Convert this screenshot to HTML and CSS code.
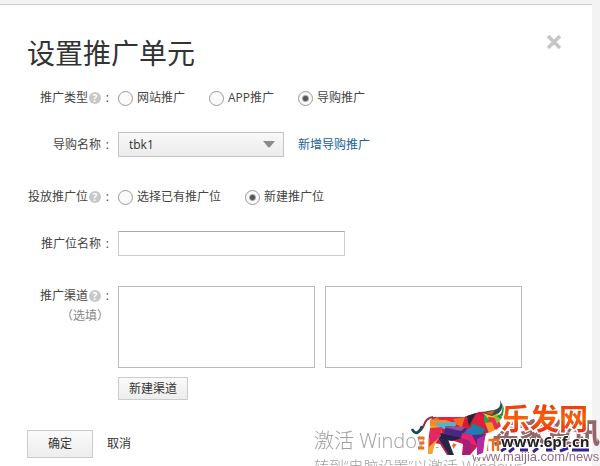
FILE: index.html
```html
<!DOCTYPE html>
<html lang="zh-CN">
<head>
    <meta charset="UTF-8">
    <meta name="viewport" content="width=device-width, initial-scale=1.0">
    <title>设置推广单元</title>
    <link rel="stylesheet" href="styles.css">
</head>
<body>
    <div class="dialog">
        <div class="dialog-header">
            <h1>设置推广单元</h1>
            <button type="button" class="close" aria-label="关闭">
                <svg width="16" height="16" viewBox="0 0 16 16"><path d="M2 2L14 14M14 2L2 14" stroke="#c6c6c6" stroke-width="3.4" fill="none"/></svg>
            </button>
        </div>

        <form>
            <div class="form-row" role="radiogroup" aria-labelledby="typeLabel">
                <div class="row-label"><span id="typeLabel">推广类型</span><i class="help">?</i><span class="colon">:</span></div>
                <div class="options">
                    <label><input type="radio" name="type">网站推广</label>
                    <label><input type="radio" name="type">APP推广</label>
                    <label><input type="radio" name="type" checked>导购推广</label>
                </div>
            </div>

            <div class="form-row">
                <label class="row-label" for="guide">导购名称<span class="colon">:</span></label>
                <div class="inline">
                    <div class="select">
                        <select id="guide"><option>tbk1</option></select>
                        <svg width="12" height="7" viewBox="0 0 12 7"><path d="M0 0H12L7 6Q6 7 5 6Z" fill="#8c8c8c"/></svg>
                    </div>
                    <a href="#">新增导购推广</a>
                </div>
            </div>

            <div class="form-row section" role="radiogroup" aria-labelledby="placeLabel">
                <div class="row-label"><span id="placeLabel">投放推广位</span><i class="help">?</i><span class="colon">:</span></div>
                <div class="options">
                    <label><input type="radio" name="place">选择已有推广位</label>
                    <label><input type="radio" name="place" checked>新建推广位</label>
                </div>
            </div>

            <div class="form-row">
                <label class="row-label" for="placeName">推广位名称<span class="colon">:</span></label>
                <input type="text" id="placeName">
            </div>

            <div class="form-row section channel">
                <div class="channel-label">
                    <label class="row-label" for="channel">推广渠道<i class="help">?</i><span class="colon">:</span></label>
                    <div class="optional">（选填）</div>
                </div>
                <div>
                    <div class="lists">
                        <select id="channel" size="4"></select>
                        <select size="4" aria-label="已选渠道"></select>
                    </div>
                    <button type="button" class="small">新建渠道</button>
                </div>
            </div>

            <div class="actions">
                <button type="submit">确定</button>
                <a href="#">取消</a>
            </div>
        </form>
    </div>

    <div class="overlay">
        <div class="activate">
            <p class="activate-title">激活 Windows</p>
            <p>转到“电脑设置”以激活 Windows</p>
        </div>
        <svg class="logo" width="190" height="76" viewBox="0 0 190 76">
            <defs>
                <linearGradient id="fire" x1="0" y1="0" x2="0" y2="1">
                    <stop offset="0" stop-color="#e0300a"/>
                    <stop offset=".5" stop-color="#fa620c"/>
                    <stop offset="1" stop-color="#e01818"/>
                </linearGradient>
            </defs>

            <!-- site name and address behind the bull -->
            <text class="site-name" x="82" y="53">卖家资讯</text>
            <text class="site-url" x="62" y="71">www.maijia.com/news</text>
            <path d="M8 48H22M10 53H20M8 58H25M38 50H48L42 58" stroke="#f36b1d" stroke-width="3" fill="none"/>
            <path d="M66 61V50H88V61M72 49V61M77 48V61M83 49V61" stroke="#f36b1d" stroke-width="2.4" fill="none"/>
            <path d="M91 61L96 58M99 62L104 58M110 60H118M123 62L128 58M136 60H144M150 61L158 58M162 60H179" stroke="#35208f" stroke-width="3" fill="none"/>

            <!-- bull: white halo and base colour first, then facets -->
            <g transform="translate(0 5)">
                <path d="M22 21L56 21L69 17L80 15L90 14L94 30L87 38L77 42L74 60H66L64 52L60 60H52L52 50L44 46L38 46L44 60H34L30 50L24 49L23 60H16L17 27Z" fill="#fff" stroke="#fff" stroke-width="4" stroke-linejoin="round"/>
                <path d="M22 22L54 22L69 17L82 16L90 24L84 35L75 39L73 57L67 60V52L60 60H52L53 49L38 44L43 60H37L30 49L24 48L22 59H18L19 40Z" fill="#c01f55"/>
                <path d="M2 35L6 38Q11 37 14 30Q16 23 23 22" stroke="#9c2a40" stroke-width="2" fill="none"/>
                <path d="M2 34Q4 38 7 38Q11 35 12 31" stroke="#184958" stroke-width="2.6" fill="none"/>
                <path d="M20 25L28 22L43 23L31 30Z" fill="#f16a27"/>
                <path d="M28 22L54 22L47 28L31 29Z" fill="#e9243a"/>
                <path d="M20 25L31 30L32 39L20 34Z" fill="#ffb229"/>
                <path d="M20 25L36 25L47 29L31 32L20 31Z" fill="#f58a2a"/>
                <path d="M24 28L48 27L42 36L31 33Z" fill="#4fb7cc"/>
                <path d="M43 24L56 22L52 33L46 29Z" fill="#f36a22"/>
                <path d="M20 33L32 32L31 41L20 46Z" fill="#e32a50"/>
                <path d="M36 31L57 33L51 43L34 38Z" fill="#452a80"/>
                <path d="M35 31L56 32L51 36L37 33Z" fill="#9b50a0"/>
                <path d="M31 38L52 43L42 46L29 44Z" fill="#232050"/>
                <path d="M55 22L71 18L63 33L52 32Z" fill="#d71935"/>
                <path d="M57 21L66 18L59 31Z" fill="#19283c"/>
                <path d="M67 19L79 24L74 34L62 28Z" fill="#e21c3d"/>
                <path d="M74 19L82 17L80 31L74 27Z" fill="#25a54d"/>
                <path d="M62 28L75 34L71 41L60 40Z" fill="#158a80"/>
                <path d="M60 32L75 34L64 41L54 38Z" fill="#2877bc"/>
                <path d="M52 38L62 40L67 51L51 45Z" fill="#e42473"/>
                <path d="M51 43L60 46L61 58L52 60L55 52Z" fill="#a11f79"/>
                <path d="M62 40L76 39L74 46L67 49Z" fill="#4d2c87"/>
                <path d="M67 44L75 40L73 58L67 60Z" fill="#b52aa0"/>
                <path d="M18 44L31 40L25 49L22 59H18Z" fill="#f2a72b"/>
                <path d="M20 36L31 41L23 48L19 52Z" fill="#e32868"/>
                <path d="M29 44L38 45L44 60H39Z" fill="#232943"/>
                <path d="M73 18L87 16L91 24L83 29Z" fill="#e8c51e"/>
                <path d="M78 22L88 23L91 31L86 35L80 30Z" fill="#ee2b4d"/>
                <path d="M83 19L91 24L87 29Z" fill="#8cbf36"/>
                <path d="M75 28L82 27L85 35L79 38Z" fill="#f59724"/>
                <path d="M73 18Q79 15 84 15Q92 13 90 5Q95 13 89 18L82 21Z" fill="#27514b"/>
                <path d="M75 18L85 15L82 20Z" fill="#ed4b24"/>
                <path d="M86 21Q94 20 92 8Q97 18 91 24Z" fill="#2d8b54"/>
            </g>

            <text class="brand" x="91" y="40">乐发网</text>
            <text class="brand-url" x="91" y="57">www.6pf.cn</text>
        </svg>
    </div>
</body>
</html>
```

FILE: styles.css
```css
* {
    box-sizing: border-box;
    margin: 0;
    padding: 0;
}

body {
    font-family: "Open Sans", "Noto Sans CJK SC", sans-serif;
    font-size: 12px;
    line-height: 20px;
    color: #444;
    background-color: #f3f3f3;
    padding: 4px 8px 0 0;
}

.dialog {
    min-height: calc(100vh - 4px);
    padding: 29px 30px 7px 27px;
    border-top: 1px solid #ccc;
    background: white;
}

.dialog-header {
    display: flex;
    justify-content: space-between;
    align-items: flex-start;
    margin-bottom: 14px;
}

h1 {
    font-size: 28px;
    font-weight: 400;
    line-height: 38px;
    margin-bottom: 2px;
    color: #333;
}

button,
input,
select {
    font: inherit;
    color: #333;
}

.close {
    display: flex;
    border: none;
    background: none;
    cursor: pointer;
}

a {
    color: #1a6096;
    text-decoration: none;
}

.form-row {
    display: grid;
    grid-template-columns: 82px 1fr;
    gap: 9px;
    align-items: center;
    margin-bottom: 24px;
}

.form-row.section {
    margin-top: 30px;
}

.row-label {
    display: flex;
    justify-content: flex-end;
    align-items: center;
    white-space: nowrap;
}

.colon {
    width: 8px;
    text-align: right;
}

.help {
    width: 12px;
    height: 12px;
    margin-left: 1px;
    border-radius: 50%;
    background: #c8c8c8;
    color: white;
    font-size: 10px;
    font-style: normal;
    font-weight: bold;
    line-height: 12px;
    text-align: center;
}

.options {
    display: flex;
    gap: 24px;
}

.options label {
    display: flex;
    align-items: center;
    gap: 4px;
}

input[type="radio"] {
    appearance: none;
    width: 15px;
    height: 15px;
    border: 1px solid #999;
    border-radius: 50%;
    background: #fafafa;
}

input[type="radio"]:checked {
    background: radial-gradient(circle, #555 2px, #fafafa 4px);
}

.inline {
    display: flex;
    align-items: center;
    gap: 14px;
}

.select {
    display: grid;
    align-items: center;
    width: 166px;
}

.select select,
.select svg {
    grid-area: 1 / 1;
}

.select select {
    appearance: none;
    height: 25px;
    padding: 0 10px;
    border: 1px solid #c4c4c4;
    border-radius: 0;
    background: linear-gradient(#f8f8f8, #ececec);
}

.select svg {
    justify-self: end;
    margin-right: 9px;
    pointer-events: none;
}

input[type="text"] {
    width: 227px;
    height: 25px;
    padding: 0 8px;
    border: 1px solid #ccc;
    border-top-color: #aaa;
    background: white;
}

.channel {
    align-items: start;
}

.optional {
    color: #888;
    text-align: right;
    white-space: nowrap;
}

.lists {
    display: flex;
    gap: 10px;
    margin-bottom: 9px;
}

.lists select {
    width: 197px;
    height: 82px;
    border: 1px solid #bbb;
    border-radius: 0;
    background: white;
}

button[type="submit"],
.small {
    height: 28px;
    padding: 0 20px;
    border: 1px solid #ccc;
    background: linear-gradient(#fafafa, #ededed);
    cursor: pointer;
}

button.small {
    display: block;
    height: 23px;
    padding: 0 10px;
}

.actions {
    display: flex;
    align-items: center;
    gap: 14px;
    margin-top: 30px;
}

.actions a {
    color: #333;
}

/* screen watermark and site logo lie over the dialog */
.overlay {
    position: fixed;
    right: 0;
    bottom: 0;
    width: 286px;
    height: 76px;
    overflow: hidden;
    pointer-events: none;
}

.activate {
    padding-top: 38px;
    color: #a0a0a0;
    font-size: 15px;
    font-weight: 300;
    line-height: 24px;
    white-space: nowrap;
}

.activate-title {
    font-size: 20px;
    line-height: 26px;
}

.logo {
    position: absolute;
    right: 0;
    bottom: 0;
}

.site-name {
    font-size: 27px;
    font-weight: 900;
    fill: #94666a;
}

.site-url {
    font-family: "Liberation Sans", sans-serif;
    font-size: 13px;
    fill: #946f88;
}

.brand {
    font-size: 29px;
    font-weight: 700;
    fill: url(#fire);
    stroke: white;
    stroke-width: 3px;
    paint-order: stroke;
}

.brand-url {
    font-family: "Open Sans", sans-serif;
    font-size: 15px;
    font-weight: bold;
    fill: #222;
    stroke: white;
    stroke-width: 2px;
    paint-order: stroke;
}
```
